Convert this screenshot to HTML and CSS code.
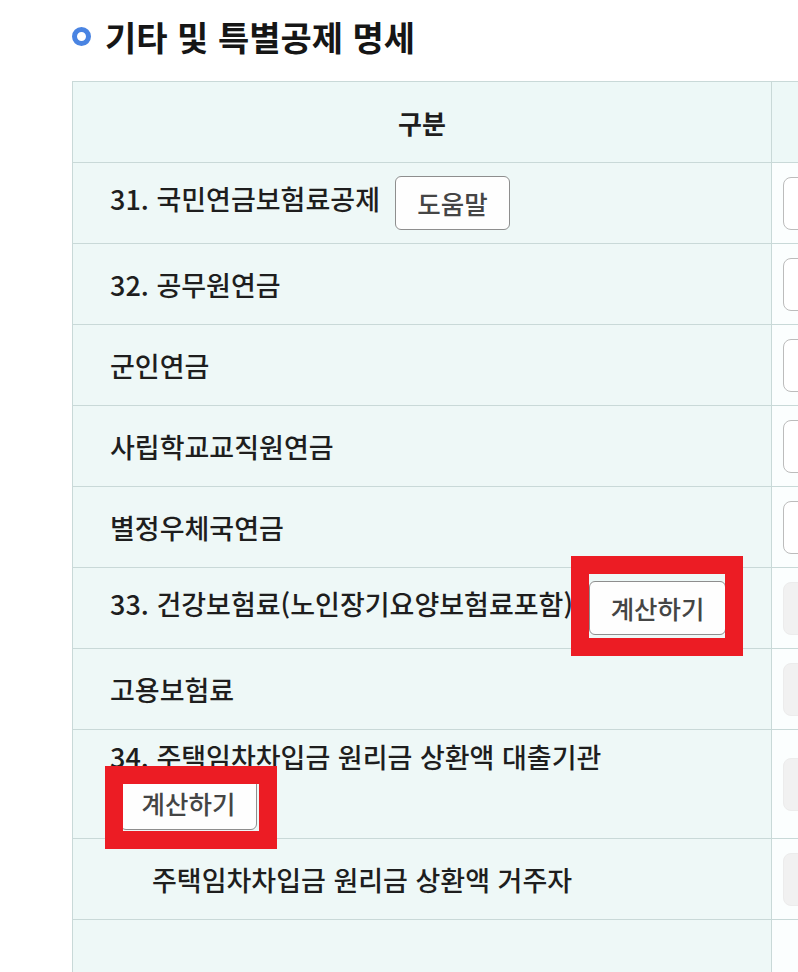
FILE: index.html
```html
<!DOCTYPE html>
<html lang="ko">
<head>
<meta charset="utf-8">
<title>기타 및 특별공제 명세</title>
<link rel="stylesheet" href="styles.css">
</head>
<body>
<div class="page">
  <h2 class="title"><span class="dot"></span>기타 및 특별공제 명세</h2>
  <div class="table-wrap">
    <table class="grid">
      <colgroup>
        <col class="col-label">
        <col class="col-value">
      </colgroup>
      <thead>
        <tr class="row">
          <th class="head">구분</th>
          <th class="head head-value"></th>
        </tr>
      </thead>
      <tbody>
        <tr class="row">
          <td class="label">31. 국민연금보험료공제<button class="btn btn-help">도움말</button></td>
          <td class="value"><div class="field"></div></td>
        </tr>
        <tr class="row">
          <td class="label">32. 공무원연금</td>
          <td class="value"><div class="field"></div></td>
        </tr>
        <tr class="row">
          <td class="label">군인연금</td>
          <td class="value"><div class="field"></div></td>
        </tr>
        <tr class="row">
          <td class="label">사립학교교직원연금</td>
          <td class="value"><div class="field"></div></td>
        </tr>
        <tr class="row">
          <td class="label">별정우체국연금</td>
          <td class="value"><div class="field"></div></td>
        </tr>
        <tr class="row">
          <td class="label">33. 건강보험료(노인장기요양보험료포함)<span class="mark mark-a"><button class="btn btn-calc">계산하기</button></span></td>
          <td class="value"><div class="field field-off"></div></td>
        </tr>
        <tr class="row">
          <td class="label">고용보험료</td>
          <td class="value"><div class="field field-off"></div></td>
        </tr>
        <tr class="row row-tall">
          <td class="label label-stack">
            <span class="stack-text">34. 주택임차차입금 원리금 상환액 대출기관</span>
            <span class="mark mark-b"><button class="btn btn-calc">계산하기</button></span>
          </td>
          <td class="value"><div class="field field-off"></div></td>
        </tr>
        <tr class="row">
          <td class="label label-indent">주택임차차입금 원리금 상환액 거주자</td>
          <td class="value"><div class="field field-off"></div></td>
        </tr>
        <tr class="row">
          <td class="label"></td>
          <td class="value"></td>
        </tr>
      </tbody>
    </table>
  </div>
</div>
</body>
</html>
```

FILE: styles.css
```css
html, body {
  margin: 0;
  padding: 0;
  background: #ffffff;
  overflow: hidden;
}

body {
  font-family: "Noto Sans CJK KR", "Noto Sans", "Liberation Sans", sans-serif;
  color: #1e1e1e;
}

.page {
  width: 798px;
  height: 972px;
  overflow: hidden;
  padding-left: 72px;
  box-sizing: border-box;
}

.title {
  display: flex;
  align-items: center;
  gap: 14px;
  margin: 0;
  padding-top: 14px;
  height: 44px;
  margin-bottom: 23px;
  font-size: 34px;
  font-weight: 700;
  color: #161616;
  white-space: nowrap;
}

.dot {
  display: block;
  width: 19px;
  height: 19px;
  box-sizing: border-box;
  border: 5px solid #4a84e2;
  border-radius: 50%;
  background: #ffffff;
  flex: none;
}

.table-wrap {
  width: 1100px;
}

.grid {
  border-collapse: collapse;
  table-layout: fixed;
  width: 1000px;
}

.col-label {
  width: 699px;
}

.col-value {
  width: 301px;
}

.row {
  height: 81px;
}

.row-tall {
  height: 109px;
}

.grid th,
.grid td {
  border: 1px solid #c9d9d8;
  padding: 0;
  vertical-align: middle;
}

.head {
  background: #edf8f7;
  font-size: 26px;
  font-weight: 700;
  color: #1e1e1e;
  text-align: center;
}

.label {
  background: #eef8f7;
  font-size: 27px;
  font-weight: 500;
  color: #1e1e1e;
  padding-left: 37px !important;
  white-space: nowrap;
  text-align: left;
}

.label-indent {
  padding-left: 79px !important;
}

.label-stack {
  white-space: normal;
  vertical-align: top !important;
  padding-top: 12px !important;
}

.stack-text {
  display: block;
  line-height: 30px;
  white-space: nowrap;
}

.value {
  background: #fbfefe;
  padding-left: 11px !important;
}

.field {
  width: 220px;
  height: 53px;
  box-sizing: border-box;
  border: 1px solid #bcbcbc;
  border-radius: 8px;
  background: #ffffff;
}

.field-off {
  border-color: #ececec;
  background: #f1f1f1;
}

.btn {
  font-family: "Noto Sans CJK KR", "Noto Sans", "Liberation Sans", sans-serif;
  font-size: 25.5px;
  font-weight: 500;
  color: #454545;
  background: #fefefe;
  border: 1px solid #8e8e8e;
  border-radius: 6px;
  height: 54px;
  padding: 0 21px;
  margin: 0;
  vertical-align: middle;
  line-height: 1;
}

.btn-help {
  width: 115px;
  padding: 0;
  margin-left: 15px;
}

.btn-calc {
  width: 137px;
  padding: 0;
}

.mark {
  position: relative;
  display: inline-block;
  vertical-align: middle;
  margin-left: 16px;
}

.mark .btn {
  display: block;
}

.mark::after {
  content: "";
  position: absolute;
  border: 18px solid #ec1c24;
  pointer-events: none;
}

.mark-a::after {
  left: -18px;
  right: -17px;
  top: -25px;
  bottom: -21px;
}

.mark-b {
  display: block;
  width: 137px;
  margin-left: 10px;
  margin-top: 4px;
}

.mark-b::after {
  left: -15px;
  right: -20px;
  top: -10px;
  bottom: -19px;
}
```
